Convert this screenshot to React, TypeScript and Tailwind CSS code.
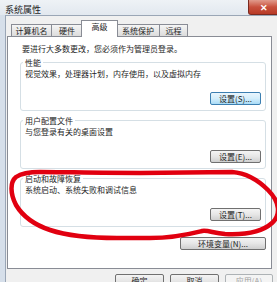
import React from 'react';

const btn =
  'flex items-center justify-center rounded-[2px] border border-[#707070] bg-linear-to-b from-[#f4f4f4] via-[#e6e6e6] to-[#cfcfcf] text-[8px] leading-none text-[#1e1e1e]';
const btnFocus =
  'flex items-center justify-center rounded-[2px] border border-[#3c7fb1] bg-linear-to-b from-[#eaf6fd] via-[#d4eefb] to-[#a9dbf6] text-[8px] leading-none text-[#1e1e1e]';

const tabBase =
  'flex h-[12px] items-center justify-center border border-b-0 border-[#898c95] bg-linear-to-b from-[#f5f5f5] to-[#dcdcdc] text-[8px] leading-none';

function Group({
  title,
  text,
  label,
  focused,
}: {
  title: string;
  text: string;
  label: string;
  focused?: boolean;
}) {
  return (
    <div className="relative flex h-[49px] flex-col rounded-[3px] border border-[#d5dfe5] px-[4px] pt-[6px] pb-[5px]">
      {/* legend sits on the top border */}
      <span className="absolute -top-[5px] left-[2px] bg-white px-[2px] text-[8px] leading-[10px]">
        {title}
      </span>
      <p className="h-[10px] text-[8px] leading-[10px]">{text}</p>
      <div className="mt-auto flex justify-end">
        <button className={`${focused ? btnFocus : btn} h-[13px] w-[51px]`}>{label}</button>
      </div>
    </div>
  );
}

export default function App() {
  return (
    <div className="relative flex h-[282px] w-[277px] flex-col overflow-hidden bg-[#d6dfea] font-['Noto_Sans_CJK_SC',sans-serif] text-[#1e1e1e]">
      {/* Title bar */}
      <div className="flex h-[18px] items-start bg-linear-to-b from-[#eef2f6] to-[#e2e8ef]">
        <span className="mt-[5px] ml-[5px] text-[9px] leading-[10px]">系统属性</span>
        <div className="ml-auto mr-[-3px] flex h-[15px] w-[32px] items-center justify-center rounded-bl-[3px] border border-t-0 border-[#7a2a20] bg-linear-to-b from-[#e09a8c] via-[#c8503d] to-[#b83a26] text-[9px] font-bold leading-none text-white">
          ✕
        </div>
      </div>

      {/* Client area */}
      <div className="ml-[5px] flex flex-1 flex-col border-t border-l border-[#9aa6b6] bg-[#f0f0f0] pt-[4px] pl-[1px]">
        {/* Tabs */}
        <div className="flex h-[16px] items-end pl-[4px]">
          <div className={`${tabBase} w-[41px]`}>计算机名</div>
          <div className={`${tabBase} -ml-px w-[32px]`}>硬件</div>
          <div className="relative z-10 -mb-px -ml-[2px] flex h-[17px] w-[37px] items-start justify-center border border-b-0 border-[#898c95] bg-white pt-[2px] text-[8px] leading-none">
            高级
          </div>
          <div className={`${tabBase} -ml-[2px] w-[44px]`}>系统保护</div>
          <div className={`${tabBase} -ml-px w-[29px]`}>远程</div>
        </div>

        {/* Tab panel */}
        <div className="flex h-[233px] w-[265px] flex-col border border-[#898c95] bg-white pr-[5px] pl-[12px]">
          <p className="mt-[7px] ml-[2px] h-[10px] text-[8px] leading-[10px]">
            要进行大多数更改，您必须作为管理员登录。
          </p>
          <div className="mt-[8px] flex flex-col gap-[9px]">
            <Group
              title="性能"
              text="视觉效果，处理器计划，内存使用，以及虚拟内存"
              label="设置(S)..."
              focused
            />
            <Group title="用户配置文件" text="与您登录有关的桌面设置" label="设置(E)..." />
            <Group title="启动和故障恢复" text="系统启动、系统失败和调试信息" label="设置(T)..." />
          </div>
          <div className="mt-[10px] flex justify-end">
            <button className={`${btn} h-[13px] w-[86px]`}>环境变量(N)...</button>
          </div>
        </div>

        {/* Dialog buttons */}
        <div className="mt-[5px] flex justify-end gap-[6px] pr-[4px]">
          <button className={`${btn} h-[14px] w-[49px]`}>确定</button>
          <button className={`${btn} h-[14px] w-[49px]`}>取消</button>
          <button className="flex h-[14px] w-[48px] items-center justify-center rounded-[2px] border border-[#adb2b5] bg-[#f4f4f4] text-[8px] leading-none text-[#a0a0a0]">
            应用(A)
          </button>
        </div>
      </div>

      {/* Red hand-drawn circle over the startup group */}
      <svg
        className="pointer-events-none absolute top-0 left-0"
        width="277"
        height="282"
        viewBox="0 0 277 282"
      >
        <path
          d="M40 172 C60 172 100 173 140 173 L232 172 C245 173 258 180 268 190 C280 202 281 215 272 223 C262 232 245 235 225 234 C213 233 208 230 202 231 C190 234 175 238 150 238 L117 238 C90 238 65 235 50 230 C32 224 22 215 16 205 C10 193 10 182 16 177 C22 173 30 172 40 172 Z"
          fill="none"
          stroke="#e10010"
          strokeWidth="4.5"
          strokeLinecap="round"
          strokeLinejoin="round"
        />
      </svg>
    </div>
  );
}
